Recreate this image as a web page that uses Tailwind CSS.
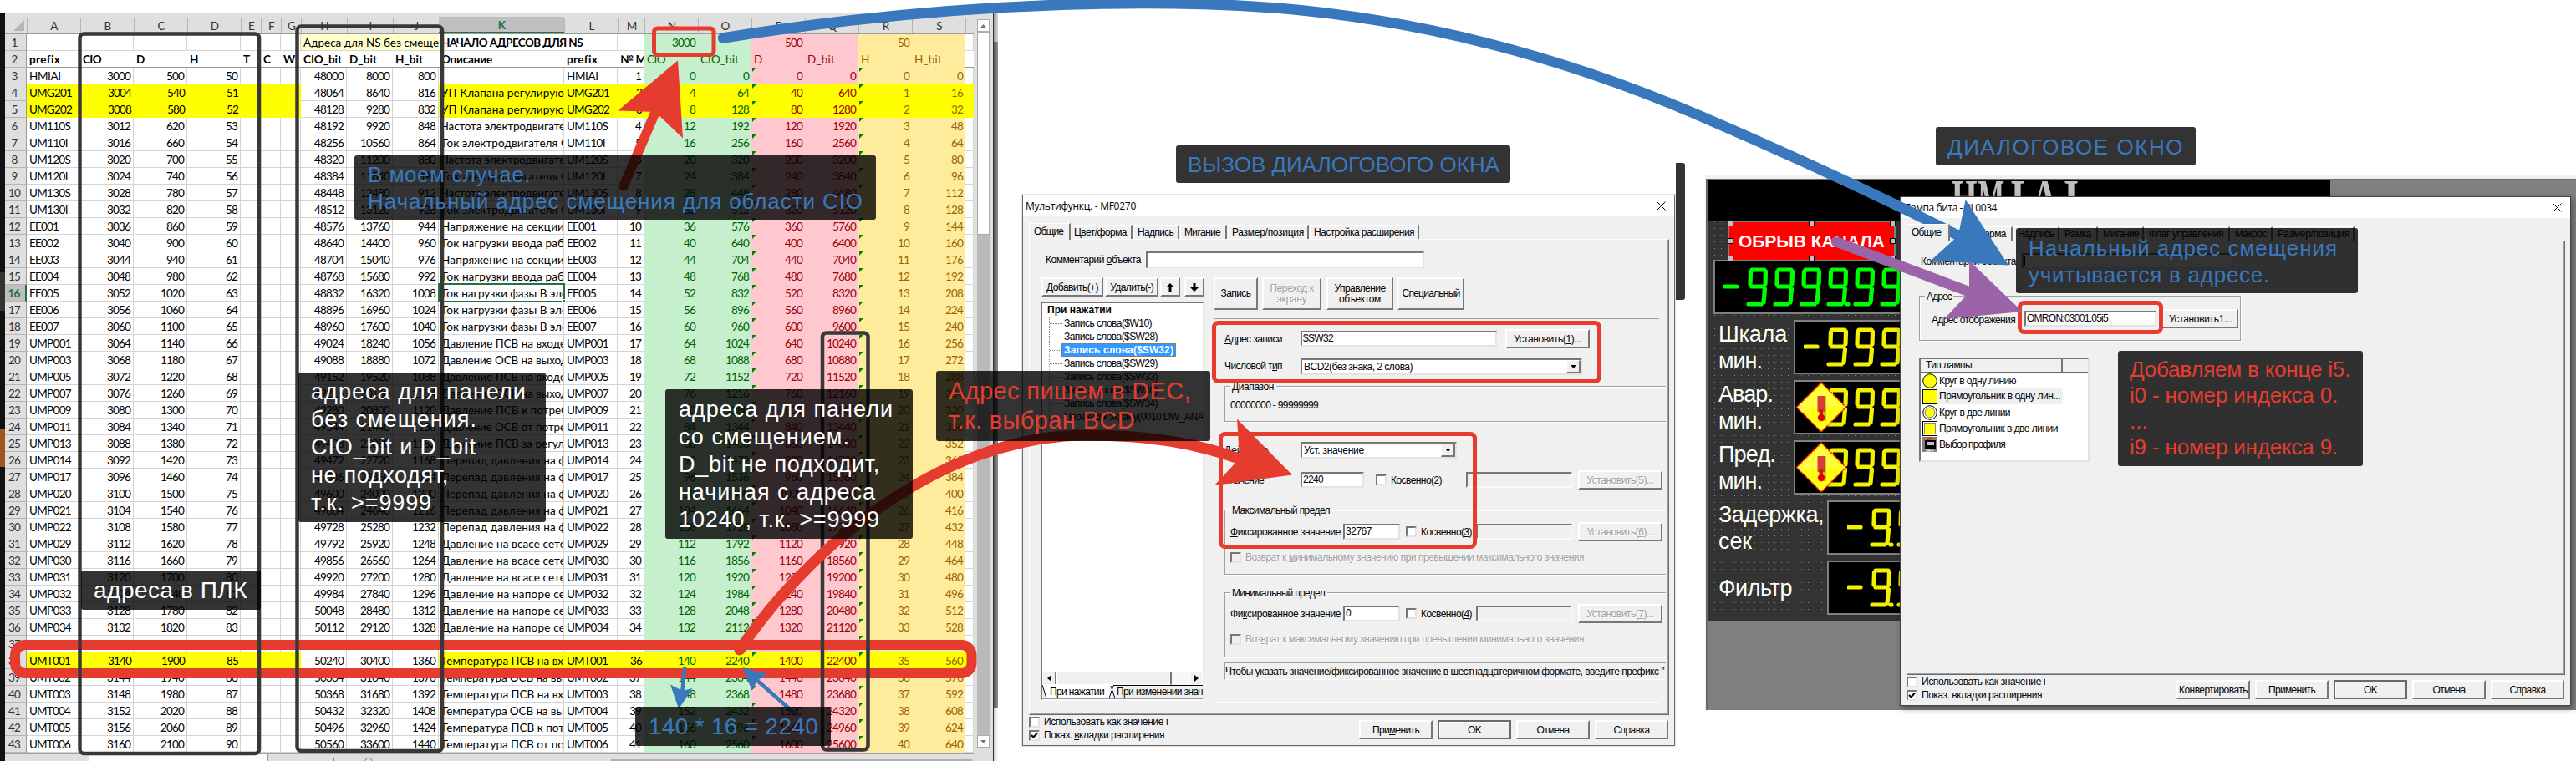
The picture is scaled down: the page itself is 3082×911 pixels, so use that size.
<!DOCTYPE html>
<html lang="ru">
<head>
<meta charset="utf-8">
<title>Адреса NS</title>
<script src="https://cdn.jsdelivr.net/npm/@tailwindcss/browser@4"></script>
</head>
<body class="bg-white">
<main class="relative w-[3082px] h-[911px] overflow-hidden bg-white whitespace-nowrap font-['Liberation_Sans',sans-serif] text-[12px] leading-[16px] text-black">

<!-- Spreadsheet window -->
<section class="absolute left-0 top-[15px] w-[1194px] h-[896px] flex overflow-hidden">
  <div class="w-[6px] flex flex-col bg-[#111111]">
    <div class="mt-[311px] h-[46px] bg-[#333333]"></div>
    <div class="mt-[141px] h-[46px] bg-[#a0561f]"></div>
  </div>
  <div class="w-[1182px] bg-[#dfdfdf] flex flex-col">
    <div class="flex h-[888px]">
      <div id="sheet" class="w-[1159px] h-[888px] overflow-hidden bg-white border-b border-[#a0a0a0] font-[Lato,'Open_Sans',sans-serif] text-[13.5px] leading-[20px] tracking-[-0.85px]"></div>
      <div class="ml-[4px] mt-[8px] w-[15px] h-[872px] flex flex-col bg-[#bababa]">
        <div class="h-[15px] bg-white border border-[#ababab] flex items-center justify-center"><svg width="7" height="4"><path d="M0 4L3.5 0L7 4z" fill="#777"/></svg></div>
        <div class="h-[243px] bg-white border border-[#ababab]"></div>
        <div class="mt-auto h-[15px] bg-white border border-[#ababab] flex items-center justify-center"><svg width="7" height="4"><path d="M0 0L3.5 4L7 0z" fill="#777"/></svg></div>
      </div>
    </div>
    <div class="flex h-[8px]">
      <div class="w-[101px]"></div>
      <div class="w-[214px] bg-white border-r border-[#999999]"></div>
      <div class="ml-[78px] mt-[4px] w-px h-[4px] bg-[#888888]"></div>
      <div class="ml-[36px] mt-[4px] w-[10px] h-[10px] rounded-full border border-[#777777]"></div>
      <div class="ml-[285px] mt-[6px] w-[432px] h-[2px] bg-[#b0b0b0]"></div>
    </div>
  </div>
  <div class="w-[6px] flex flex-col border-l border-[#333333]">
    <div class="h-[35px] bg-linear-to-r from-[#999999] to-[#d5d5d5]"></div>
    <div class="h-[797px] bg-linear-to-r from-[#555555] to-[#8f8f8f]"></div>
    <div class="h-[64px] bg-linear-to-r from-[#cccccc] to-white"></div>
  </div>
</section>

<!-- Function dialog -->
<section class="absolute left-[1223px] top-[233px] w-[781px] h-[660px] bg-[#f0f0f0] border border-[#6b6b6b] shadow-[0_0_0_1px_#e2e2e2] flex flex-col">
  <div class="h-[25px] bg-white flex items-center pl-[3px] pr-[10px] font-['Open_Sans',sans-serif] text-[12px]">
    <span data-w="132">Мультифункц. - MF0270</span>
    <svg class="ml-auto" width="11" height="11"><path d="M.5 .5L10.5 10.5M10.5 .5L.5 10.5" stroke="#000" fill="none"/></svg>
  </div>
  <div class="mt-[8px] ml-[7px] h-[19px] flex items-end">
    <div class="w-[50px] h-[20px] -mb-px z-10 bg-[#f0f0f0] border-t border-l border-white border-r-2 border-r-[#777777] pl-[5px] pt-[1px]"><span data-w="35">Общие</span></div>
    <div class="w-[74px] h-[17px] border-t border-t-white border-r-2 border-r-[#777777] pl-[4px]"><span data-w="63">Цвет/форма</span></div>
    <div class="ml-px w-[55px] h-[17px] border-t border-l border-white border-r-2 border-r-[#777777] pl-[4px]"><span data-w="43">Надпись</span></div>
    <div class="ml-px w-[56px] h-[17px] border-t border-l border-white border-r-2 border-r-[#777777] pl-[4px]"><span data-w="43">Мигание</span></div>
    <div class="ml-px w-[97px] h-[17px] border-t border-l border-white border-r-2 border-r-[#777777] pl-[4px]"><span data-w="86">Размер/позиция</span></div>
    <div class="ml-px w-[131px] h-[17px] border-t border-l border-white border-r-2 border-r-[#777777] pl-[4px]"><span data-w="120">Настройка расширения</span></div>
  </div>
  <div class="ml-[7px] w-[766px] h-[570px] border border-t-white border-l-white border-r-[#696969] border-b-[#696969] shadow-[inset_-1px_-1px_0_#a0a0a0] flex flex-col">
    <div class="mt-[14px] h-[20px] pl-[19px] flex items-center">
      <span class="w-[120px]"><span data-w="114">Комментарий <u>о</u>бъекта</span></span>
      <div class="w-[333px] h-[20px] bg-white border border-t-2 border-t-[#777777] border-l-2 border-l-[#777777] border-[#e3e3e3]"></div>
    </div>
    <div class="mt-[11px] flex">
      <div class="ml-[13px] w-[196px] flex flex-col">
        <div class="flex h-[23px] pl-px">
          <div class="w-[75px] flex items-center justify-center border-2 border-t-white border-l-white border-r-[#777777] border-b-[#777777]"><span data-w="62">Добавить(<u>+</u>)</span></div>
          <div class="ml-[2px] w-[65px] flex items-center justify-center border-2 border-t-white border-l-white border-r-[#777777] border-b-[#777777]"><span data-w="52">Удалить(<u>-</u>)</span></div>
          <div class="ml-[2px] w-[24px] flex items-center justify-center border-2 border-t-white border-l-white border-r-[#777777] border-b-[#777777]"><svg width="10" height="10"><path d="M5 0L10 5H6.5V10H3.5V5H0z"/></svg></div>
          <div class="ml-[5px] w-[24px] shrink-0 flex items-center justify-center border-2 border-t-white border-l-white border-r-[#777777] border-b-[#777777]"><svg width="10" height="10"><path d="M5 10L10 5H6.5V0H3.5V5H0z"/></svg></div>
        </div>
        <div class="mt-[6px] h-[478px] bg-white border-2 border-t-[#777777] border-l-[#777777] border-r-[#e8e8e8] border-b-[#fafafa] overflow-hidden flex flex-col">
          <div class="h-[16px] pl-[6px] font-bold"><span data-w="77">При нажатии</span></div>
          <div class="ml-[8px] border-l border-dotted border-[#808080] flex flex-col">
            <div class="h-[16px] flex items-center"><i class="w-[15px] border-t border-dotted border-[#808080]"></i><span class="ml-[2px]" data-w="105">Запись слова($W10)</span></div>
            <div class="h-[16px] flex items-center"><i class="w-[15px] border-t border-dotted border-[#808080]"></i><span class="ml-[2px]" data-w="112">Запись слова($SW28)</span></div>
            <div class="h-[16px] flex items-center"><i class="w-[14px] border-t border-dotted border-[#808080]"></i><div class="w-[137px] h-[16px] leading-[14px] bg-[#3399ff] border border-dotted border-[#cc6600] text-white font-bold pl-[2px]"><span data-w="131">Запись слова($SW32)</span></div></div>
            <div class="h-[16px] flex items-center"><i class="w-[15px] border-t border-dotted border-[#808080]"></i><span class="ml-[2px]" data-w="112">Запись слова($SW29)</span></div>
            <div class="h-[16px] flex items-center"><i class="w-[15px] border-t border-dotted border-[#808080]"></i><span class="ml-[2px]" data-w="112">Запись слова($SW33)</span></div>
            <div class="h-[16px] flex items-center"><i class="w-[15px] border-t border-dotted border-[#808080]"></i><span class="ml-[2px]" data-w="112">Запись слова($SW30)</span></div>
            <div class="h-[16px] flex items-center"><i class="w-[15px] border-t border-dotted border-[#808080]"></i><span class="ml-[2px]" data-w="112">Запись слова($SW34)</span></div>
            <div class="h-[16px] flex items-center"><i class="w-[15px] shrink-0 border-t border-dotted border-[#808080]"></i><span class="ml-[2px]" data-w="167">Переход к экрану(0010:DW_ANA</span></div>
          </div>
          <div class="mt-auto h-[16px] flex bg-[#f7f7f7]">
            <div class="w-[17px] bg-[#f0f0f0] border border-white border-r-2 border-r-[#777777] flex items-center justify-center"><svg width="5" height="8"><path d="M5 0V8L0 4z"/></svg></div>
            <div class="w-[138px] bg-[#f0f0f0] border border-white border-r-2 border-r-[#777777]"></div>
            <div class="ml-auto w-[16px] bg-[#f0f0f0] border border-white flex items-center justify-center"><svg width="5" height="8"><path d="M0 0V8L5 4z"/></svg></div>
          </div>
          <div class="h-[17px] flex bg-[#f0f0f0] border-b border-[#999999]">
            <svg class="shrink-0" width="6" height="16"><path d="M0 0H6V16H5z" fill="#fff"/><path d="M0 0L5 16" stroke="#000"/></svg>
            <div class="w-[75px] bg-white pl-[3px]"><span data-w="65">При нажатии</span></div>
            <svg class="shrink-0" width="8" height="16"><path d="M0 0H6L3 16H0z" fill="#fff"/><path d="M0 16L5 1M2 1L7 16M5 .5H8" stroke="#000" fill="none"/></svg>
            <div class="flex-1 border-t border-black pl-px leading-[15px]"><span data-w="103">При изменении знач</span></div>
          </div>
        </div>
      </div>
      <div class="ml-[11px] w-[541px] flex flex-col">
        <div class="flex h-[39px] leading-[13px] text-center">
          <div class="w-[53px] flex items-center justify-center border-2 border-t-white border-l-white border-r-[#777777] border-b-[#777777]"><span data-w="36">Запись</span></div>
          <div class="ml-[5px] w-[71px] flex flex-col items-center justify-center border-2 border-t-white border-l-white border-r-[#777777] border-b-[#777777] text-[#a0a0a0] text-shadow-[1px_1px_0_#fff]"><span data-w="52">Переход к</span><span data-w="36">экрану</span></div>
          <div class="ml-[6px] w-[80px] flex flex-col items-center justify-center border-2 border-t-white border-l-white border-r-[#777777] border-b-[#777777]"><span data-w="61">Управление</span><span data-w="50">объектом</span></div>
          <div class="ml-[5px] w-[80px] flex items-center justify-center border-2 border-t-white border-l-white border-r-[#777777] border-b-[#777777]"><span data-w="69">Специальный</span></div>
        </div>
        <div class="mt-[10px] h-px w-[533px] bg-[#a0a0a0]"></div>
        <div class="h-[458px] border-l border-[#a0a0a0] flex flex-col pl-[12px]">
          <div class="mt-[12px] h-[23px] flex items-center">
            <span class="w-[91px]"><span data-w="69"><u>А</u>дрес записи</span></span>
            <div class="w-[235px] h-[19px] leading-[15px] bg-white border-2 border-t-[#777777] border-l-[#777777] border-[#e3e3e3] pl-px"><span data-w="36">$SW32</span></div>
            <div class="ml-[10px] w-[101px] h-[23px] flex items-center justify-center border-2 border-t-white border-l-white border-r-[#777777] border-b-[#777777]"><span data-w="81">Установить(<u>1</u>)...</span></div>
          </div>
          <div class="mt-[12px] h-[20px] flex items-center">
            <span class="w-[91px] -mt-[3px]"><span data-w="69">Числовой т<u>и</u>п</span></span>
            <div class="w-[337px] h-[20px] bg-white border-2 border-t-[#777777] border-l-[#777777] border-[#e3e3e3] pl-[2px] flex"><span data-w="130">BCD2(без знака, 2 слова)</span><div class="ml-auto w-[17px] h-[16px] bg-[#f0f0f0] border border-t-white border-l-white border-r-2 border-b-2 border-[#777777] flex items-center justify-center"><svg width="7" height="4"><path d="M0 0H7L3.5 4z"/></svg></div></div>
          </div>
          <div class="mt-[13px] h-[43px] w-[528px] border border-r-0 border-[#a0a0a0] shadow-[0_1px_0_#fff,inset_0_1px_0_#fff] pl-[6px] flex flex-col">
            <div class="-mt-[8px] h-[16px]"><span class="bg-[#f0f0f0] pl-[2px] pr-[3px]"><span data-w="50">Диапазон</span></span></div>
            <span class="mt-[6px]" data-w="105">00000000 - 99999999</span>
          </div>
          <div class="mt-[24px] h-[20px] flex items-center">
            <span class="w-[91px]"><u>Д</u>ействие</span>
            <div class="w-[187px] h-[20px] bg-white border-2 border-t-[#777777] border-l-[#777777] border-[#e3e3e3] pl-[2px] flex"><span data-w="72">Уст. значение</span><div class="ml-auto w-[17px] h-[16px] bg-[#f0f0f0] border border-t-white border-l-white border-r-2 border-b-2 border-[#777777] flex items-center justify-center"><svg width="7" height="4"><path d="M0 0H7L3.5 4z"/></svg></div></div>
          </div>
          <div class="mt-[14px] h-[23px] flex items-center">
            <span class="w-[91px]"><span data-w="47"><u>З</u>начение</span></span>
            <div class="w-[76px] h-[19px] leading-[15px] bg-white border-2 border-t-[#777777] border-l-[#777777] border-[#e3e3e3] pl-px"><span data-w="24">2240</span></div>
            <div class="ml-[14px] w-[13px] h-[13px] bg-white border-2 border-t-[#777777] border-l-[#777777] border-[#e3e3e3]"></div>
            <span class="ml-[5px] w-[90px]"><span data-w="61">Косвенно(<u>2</u>)</span></span>
            <div class="w-[127px] h-[19px] border-2 border-t-[#777777] border-l-[#777777] border-[#fafafa]"></div>
            <div class="ml-[7px] w-[101px] h-[23px] flex items-center justify-center border-2 border-t-white border-l-white border-r-[#777777] border-b-[#777777] text-[#a0a0a0] text-shadow-[1px_1px_0_#fff]"><span data-w="80">Установить(<u>5</u>)...</span></div>
          </div>
          <div class="mt-[24px] h-[78px] w-[528px] border border-r-0 border-[#a0a0a0] shadow-[0_1px_0_#fff,inset_0_1px_0_#fff] pl-[6px] flex flex-col">
            <div class="-mt-[8px] h-[16px]"><span class="bg-[#f0f0f0] pl-[2px] pr-[3px]"><span data-w="117">Максимальный предел</span></span></div>
            <div class="mt-[6px] h-[23px] flex items-center">
              <span class="w-[135px]"><span data-w="132"><u>Ф</u>иксированное значение</span></span>
              <div class="w-[68px] h-[19px] leading-[15px] bg-white border-2 border-t-[#777777] border-l-[#777777] border-[#e3e3e3] pl-px"><span data-w="31">32767</span></div>
              <div class="ml-[7px] w-[13px] h-[13px] bg-white border-2 border-t-[#777777] border-l-[#777777] border-[#e3e3e3]"></div>
              <span class="ml-[5px] w-[66px]"><span data-w="61">Косвенно(<u>3</u>)</span></span>
              <div class="w-[115px] h-[19px] border-2 border-t-[#777777] border-l-[#777777] border-[#fafafa]"></div>
              <div class="ml-[7px] w-[101px] h-[23px] flex items-center justify-center border-2 border-t-white border-l-white border-r-[#777777] border-b-[#777777] text-[#a0a0a0] text-shadow-[1px_1px_0_#fff]"><span data-w="80">Установить(<u>6</u>)...</span></div>
            </div>
            <div class="mt-[11px] h-[16px] flex items-center text-[#a0a0a0] text-shadow-[1px_1px_0_#fff]">
              <div class="w-[13px] h-[13px] border-2 border-t-[#777777] border-l-[#777777] border-[#e3e3e3]"></div>
              <span class="ml-[5px]" data-w="405">Возврат к <u>м</u>инимальному значению при превышении максимального значения</span>
            </div>
          </div>
          <div class="mt-[21px] h-[78px] w-[528px] border border-r-0 border-[#a0a0a0] shadow-[0_1px_0_#fff,inset_0_1px_0_#fff] pl-[6px] flex flex-col">
            <div class="-mt-[8px] h-[16px]"><span class="bg-[#f0f0f0] pl-[2px] pr-[3px]"><span data-w="111">Минимальный предел</span></span></div>
            <div class="mt-[5px] h-[23px] flex items-center">
              <span class="w-[135px]"><span data-w="132">Фи<u>к</u>сированное значение</span></span>
              <div class="w-[68px] h-[19px] leading-[15px] bg-white border-2 border-t-[#777777] border-l-[#777777] border-[#e3e3e3] pl-px">0</div>
              <div class="ml-[7px] w-[13px] h-[13px] bg-white border-2 border-t-[#777777] border-l-[#777777] border-[#e3e3e3]"></div>
              <span class="ml-[5px] w-[66px]"><span data-w="61">Косвенно(<u>4</u>)</span></span>
              <div class="w-[115px] h-[19px] border-2 border-t-[#777777] border-l-[#777777] border-[#fafafa]"></div>
              <div class="ml-[7px] w-[101px] h-[23px] flex items-center justify-center border-2 border-t-white border-l-white border-r-[#777777] border-b-[#777777] text-[#a0a0a0] text-shadow-[1px_1px_0_#fff]"><span data-w="80">Установить(<u>7</u>)...</span></div>
            </div>
            <div class="mt-[11px] h-[16px] flex items-center text-[#a0a0a0] text-shadow-[1px_1px_0_#fff]">
              <div class="w-[13px] h-[13px] border-2 border-t-[#777777] border-l-[#777777] border-[#e3e3e3]"></div>
              <span class="ml-[5px]" data-w="405">Воз<u>в</u>рат к максимальному значению при превышении минимального значения</span>
            </div>
          </div>
          <div class="mt-[6px] h-[21px] w-[528px] leading-[20px] border-t border-l border-[#a0a0a0] border-b border-b-white overflow-hidden"><span data-w="525">Чтобы указать значение/фиксированное значение в шестнадцатеричном формате, введите префикс "</span></div>
        </div>
        <div class="h-px w-[533px] bg-white"></div>
      </div>
    </div>
  </div>
  <div class="flex pl-[7px] pt-[1px]">
    <div class="w-[170px] flex flex-col">
      <div class="h-[16px] flex items-center -mt-px"><div class="w-[13px] h-[13px] shrink-0 bg-white border-2 border-t-[#777777] border-l-[#777777] border-[#e3e3e3]"></div><span class="ml-[5px] w-[148px] overflow-hidden"><span data-w="152">Использовать как значение п</span></span></div>
      <div class="h-[16px] flex items-center"><div class="w-[13px] h-[13px] bg-white border-2 border-t-[#777777] border-l-[#777777] border-[#e3e3e3]"><svg width="9" height="9"><path d="M1 4L3.5 6.5L8 1.5" stroke="#000" stroke-width="2" fill="none"/></svg></div><span class="ml-[5px]" data-w="144">Показ. <u>в</u>кладки расширения</span></div>
    </div>
    <div class="ml-[225px] mt-[5px] h-[23px] flex gap-[6px]">
      <div class="w-[88px] flex items-center justify-center border-2 border-t-white border-l-white border-r-[#777777] border-b-[#777777]"><span data-w="56">При<u>м</u>енить</span></div>
      <div class="w-[88px] flex items-center justify-center border-2 border-[#696969] shadow-[inset_1px_1px_0_#fff]"><span data-w="16">OK</span></div>
      <div class="w-[88px] flex items-center justify-center border-2 border-t-white border-l-white border-r-[#777777] border-b-[#777777]"><span data-w="39">Отмена</span></div>
      <div class="w-[88px] flex items-center justify-center border-2 border-t-white border-l-white border-r-[#777777] border-b-[#777777]"><span data-w="43">Справка</span></div>
    </div>
  </div>
</section>

<!-- Panel editor -->
<section class="absolute left-[2040px] top-[210px] w-[1042px] h-[640px] bg-[#808080] border-t-[4px] border-t-[#f0f0f0] border-l border-l-[#f0f0f0] overflow-hidden">
  <div class="w-full h-[636px] border-t-2 border-l-2 border-[#696969] flex flex-col">
    <div class="w-[745px] h-[48px] bg-black overflow-hidden pl-[291px]">
      <div class="flex font-['Liberation_Serif',serif] font-bold text-[62px] leading-[62px] text-[#c0c0c0] -mt-[11px]">
        <span class="w-[32px] flex justify-center"><span class="shrink-0 scale-x-[.64]">H</span></span><span class="w-[32px] flex justify-center"><span class="shrink-0 scale-x-[.54]">M</span></span><span class="w-[32px] flex justify-center"><span class="shrink-0 scale-x-[.75]">I</span></span><span class="w-[32px] flex justify-center"><span class="shrink-0 scale-x-[.7]">A</span></span><span class="w-[32px] flex justify-center"><span class="shrink-0 scale-x-[.75]">I</span></span>
      </div>
    </div>
    <div class="w-[745px] h-[480px] bg-[#333333] bg-[radial-gradient(circle_at_0.5px_0.5px,#8a8a8a_0.6px,transparent_1px)] bg-size-[8px_8px] border-t border-[#808080] flex flex-col text-[27px] leading-[32px] text-[#fffff4]">
      <div class="-mt-px ml-[24px] w-[201px] h-[49px] bg-[#ff0000] border-2 border-[#808080] flex items-center justify-center font-bold text-[21px] text-white pt-px"><span data-w="175">ОБРЫВ КАНАЛА</span></div>
      <div class="-mt-[2px] ml-[7px] w-[330px] h-[65px] bg-black border-2 border-[#808080] flex items-center pl-[10px]" data-led="#00ff00" data-n="-9999.99"></div>
      <div class="mt-[7px] h-[65px] flex"><div class="w-[103px] pl-[13px] flex flex-col justify-center"><span data-w="82">Шкала</span><span data-w="52">мин.</span></div><div class="w-[300px] bg-black border-2 border-[#808080] flex items-center pl-[10px]" data-led="#f2f200" data-n="-999"></div></div>
      <div class="mt-[7px] h-[65px] flex"><div class="w-[103px] pl-[13px] flex flex-col justify-center"><span data-w="65">Авар.</span><span data-w="52">мин.</span></div><div class="w-[300px] bg-black border-2 border-[#808080] flex items-center pl-[10px]" data-led="#f2f200" data-n="-999"></div></div>
      <div class="mt-[7px] h-[65px] flex"><div class="w-[103px] pl-[13px] flex flex-col justify-center"><span data-w="68">Пред.</span><span data-w="52">мин.</span></div><div class="w-[300px] bg-black border-2 border-[#808080] flex items-center pl-[10px]" data-led="#f2f200" data-n="-999"></div></div>
      <div class="mt-[7px] h-[65px] flex"><div class="w-[143px] pl-[13px] flex flex-col justify-center"><span data-w="126">Задержка,</span><span data-w="40">сек</span></div><div class="w-[260px] bg-black border-2 border-[#808080] flex items-center pl-[22px]" data-led="#f2f200" data-n="-9.9"></div></div>
      <div class="mt-[7px] h-[65px] flex"><div class="w-[143px] pl-[13px] flex flex-col justify-center"><span data-w="88">Фильтр</span></div><div class="w-[260px] bg-black border-2 border-[#808080] flex items-center pl-[22px]" data-led="#f2f200" data-n="-9.9"></div></div>
    </div>
  </div>
</section>

<!-- Selection handles and alarm diamonds -->
<svg class="absolute left-[2043px] top-[214px]" width="260" height="420">
  <g fill="#c0c0c0" stroke="#000">
    <rect x="24.500" y="50.500" width="6" height="6"/><rect x="121.500" y="50.500" width="6" height="6"/><rect x="218.500" y="50.500" width="6" height="6"/>
    <rect x="24.500" y="71.500" width="6" height="6"/><rect x="218.500" y="71.500" width="6" height="6"/>
    <rect x="24.500" y="92.500" width="6" height="6"/><rect x="121.500" y="92.500" width="6" height="6"/><rect x="218.500" y="92.500" width="6" height="6"/>
  </g>
  <g id="warn">
    <path d="M136 244L165.500 273.500L136 303L106.500 273.500z" fill="#ffff18" stroke="#ff1e00" stroke-width="1.500" stroke-dasharray="3 1"/>
    <path d="M136 249L160 273Q136 270 112 279L107.500 273.500z" fill="#ffff60" opacity=".6"/>
    <rect x="135" y="260" width="7" height="30" fill="#a09000" opacity=".5"/>
    <rect x="131.500" y="260" width="8.500" height="19" fill="#dc3c3c"/><rect x="133.500" y="276" width="4.500" height="6" fill="#cc1414"/>
    <circle cx="136" cy="286" r="4.200" fill="#e00000"/>
  </g>
  <use href="#warn" y="72"/>
</svg>

<!-- Lamp dialog -->
<section class="absolute left-[2273px] top-[235px] w-[803px] h-[610px] bg-[#f0f0f0] border border-[#444444] shadow-[2px_3px_8px_rgba(0,0,0,.4)] flex flex-col">
  <div class="h-[25px] bg-white flex items-center pl-[4px] pr-[10px] font-['Open_Sans',sans-serif] text-[12px]">
    <span data-w="111">Лампа бита - PL0034</span>
    <svg class="ml-auto" width="11" height="11"><path d="M.5 .5L10.5 10.5M10.5 .5L.5 10.5" stroke="#000" fill="none"/></svg>
  </div>
  <div class="mt-[7px] ml-[7px] h-[20px] flex items-end">
    <div class="w-[52px] h-[21px] -mb-px z-10 bg-[#f0f0f0] border-t border-l border-white border-r-2 border-r-[#777777] pl-[5px] pt-px"><span data-w="35">Общие</span></div>
    <div class="w-[75px] h-[17px] border-t border-t-white border-r-2 border-r-[#777777] pl-[4px]"><span data-w="63">Цвет/форма</span></div>
    <div class="ml-px w-[55px] h-[17px] border-t border-l border-white border-r-2 border-r-[#777777] pl-[4px]"><span data-w="43">Надпись</span></div>
    <div class="ml-px w-[45px] h-[17px] border-t border-l border-white border-r-2 border-r-[#777777] pl-[4px]"><span data-w="32">Рамка</span></div>
    <div class="ml-px w-[54px] h-[17px] border-t border-l border-white border-r-2 border-r-[#777777] pl-[4px]"><span data-w="43">Мигание</span></div>
    <div class="ml-px w-[102px] h-[17px] border-t border-l border-white border-r-2 border-r-[#777777] pl-[4px]"><span data-w="89">Флаг управления</span></div>
    <div class="ml-px w-[50px] h-[17px] border-t border-l border-white border-r-2 border-r-[#777777] pl-[4px]"><span data-w="38">Макрос</span></div>
    <div class="ml-px w-[97px] h-[17px] border-t border-l border-white border-r-2 border-r-[#777777] pl-[4px]"><span data-w="86">Размер/позиция</span></div>
  </div>
  <div class="ml-[7px] w-[788px] h-[520px] border border-t-white border-l-white border-r-[#696969] border-b-[#696969] shadow-[inset_-1px_-1px_0_#a0a0a0] flex flex-col">
    <div class="mt-[14px] h-[19px] pl-[16px] flex items-center">
      <span class="w-[121px]"><span data-w="114">Комментарий объекта</span></span>
      <div class="w-[254px] h-[19px] bg-white border-2 border-t-[#777777] border-l-[#777777] border-[#e3e3e3] py-px pl-px"><div class="w-px h-full bg-black"></div></div>
    </div>
    <div class="mt-[32px] ml-[14px] w-[385px] h-[54px] border border-[#a0a0a0] shadow-[1px_1px_0_#fff,inset_1px_1px_0_#fff] pl-[6px] flex flex-col">
      <div class="-mt-[8px] h-[16px]"><span class="bg-[#f0f0f0] px-[2px]"><span data-w="30">Адрес</span></span></div>
      <div class="mt-[7px] h-[23px] flex items-center">
        <span class="ml-[8px] w-[111px] pt-[2px]"><span data-w="100">Адрес отображения</span></span>
        <div class="w-[158px] h-[19px] leading-[15px] bg-white border-2 border-t-[#777777] border-l-[#777777] border-[#e3e3e3] pl-px"><span data-w="97">OMRON:03001.05i5</span></div>
        <div class="ml-[7px] w-[91px] h-[23px] flex items-center justify-center border-2 border-t-white border-l-white border-r-[#777777] border-b-[#777777]"><span data-w="75">Установить1...</span></div>
      </div>
    </div>
    <div class="mt-[20px] ml-[14px] w-[204px] h-[125px] bg-white border-2 border-t-[#777777] border-l-[#777777] border-[#e3e3e3] flex flex-col">
      <div class="flex h-[16px] bg-[#f0f0f0] border-b border-[#696969] leading-[15px]"><div class="w-[170px] pl-[6px] border-r-2 border-[#777777]"><span data-w="55">Тип лампы</span></div></div>
      <div class="h-[19px] flex items-center pl-[2px]"><svg width="18" height="18"><circle cx="9" cy="9" r="8.300" fill="#ff0" stroke="#000"/></svg><span class="ml-[2px]" data-w="92">Круг в одну линию</span></div>
      <div class="h-[19px] flex items-center pl-[2px]"><svg width="18" height="18"><rect x=".5" y=".5" width="17" height="17" fill="#ff0" stroke="#000"/></svg><span class="ml-px pl-px w-[149px] h-[19px] leading-[19px] bg-[#f0f0f0]"><span data-w="145">Прямоугольник в одну лин...</span></span></div>
      <div class="h-[19px] flex items-center pl-[2px]"><svg width="18" height="18"><circle cx="9" cy="9" r="8.300" fill="#fff" stroke="#000"/><circle cx="9" cy="9" r="6" fill="#ff0" stroke="#777"/></svg><span class="ml-[2px]" data-w="85">Круг в две линии</span></div>
      <div class="h-[19px] flex items-center pl-[2px]"><svg width="18" height="18"><rect x=".5" y=".5" width="17" height="17" fill="#fff" stroke="#000"/><rect x="2.500" y="2.500" width="13" height="13" fill="#ff0" stroke="#888"/></svg><span class="ml-[2px]" data-w="142">Прямоугольник в две линии</span></div>
      <div class="h-[19px] flex items-center pl-[2px]"><div class="w-[18px] h-[18px] bg-[#808080] flex flex-col items-center text-[5px] leading-[4px] font-bold"><span class="text-[#ff0000]">ON</span><div class="w-[13px] h-[10px] bg-[#c0c0c0] border-2 border-black border-b-[4px]"></div><span class="text-white">OFF</span></div><span class="ml-[2px]" data-w="79">Выбор профиля</span></div>
    </div>
  </div>
  <div class="flex pl-[7px] pr-[7px]">
    <div class="w-[170px] flex flex-col">
      <div class="h-[16px] flex items-center"><div class="w-[13px] h-[13px] shrink-0 bg-white border-2 border-t-[#777777] border-l-[#777777] border-[#e3e3e3]"></div><span class="ml-[5px] w-[148px] overflow-hidden"><span data-w="152">Использовать как значение п</span></span></div>
      <div class="h-[16px] flex items-center"><div class="w-[13px] h-[13px] bg-white border-2 border-t-[#777777] border-l-[#777777] border-[#e3e3e3]"><svg width="9" height="9"><path d="M1 4L3.5 6.5L8 1.5" stroke="#000" stroke-width="2" fill="none"/></svg></div><span class="ml-[5px]" data-w="144">Показ. вкладки расширения</span></div>
    </div>
    <div class="ml-auto mt-[6px] h-[23px] flex gap-[6px]">
      <div class="w-[88px] flex items-center justify-center border-2 border-t-white border-l-white border-r-[#777777] border-b-[#777777]"><span data-w="82">Конвертировать</span></div>
      <div class="w-[88px] flex items-center justify-center border-2 border-t-white border-l-white border-r-[#777777] border-b-[#777777]"><span data-w="56">Применить</span></div>
      <div class="w-[88px] flex items-center justify-center border-2 border-[#696969] shadow-[inset_1px_1px_0_#fff]"><span data-w="16">OK</span></div>
      <div class="w-[88px] flex items-center justify-center border-2 border-t-white border-l-white border-r-[#777777] border-b-[#777777]"><span data-w="39">Отмена</span></div>
      <div class="w-[88px] flex items-center justify-center border-2 border-t-white border-l-white border-r-[#777777] border-b-[#777777]"><span data-w="43">Справка</span></div>
    </div>
  </div>
</section>

<!-- Frames and arrows drawn over the windows -->
<svg class="absolute left-0 top-0" width="3082" height="911" fill="none">
  <rect x="18" y="772" width="1144.500" height="34" rx="12" stroke="#e63c30" stroke-width="12"/>
  <g stroke="#383838" stroke-width="4.500">
    <rect x="95.500" y="40.500" width="214.500" height="861.500" rx="5"/>
    <rect x="355.500" y="31.500" width="173.500" height="867.500" rx="5"/>
    <rect x="984" y="398.500" width="54.500" height="499" rx="5"/>
  </g>
  <path d="M885 778C960 665 1120 521 1300 521C1375 521 1430 530 1485 550" stroke="#e63c30" stroke-width="13" stroke-linecap="round"/>
  <path d="M1546 568.500L1480 501.500L1483 549L1453 581z" fill="#e63c30"/>
  <g stroke="#e63c30" stroke-width="5">
    <rect x="782.500" y="34" width="71.500" height="31.500" rx="4"/>
    <rect x="1452.500" y="386.500" width="461" height="70" rx="5"/>
    <rect x="1460.500" y="519.500" width="304" height="135" rx="5"/>
    <rect x="2416.500" y="362.500" width="169" height="35" rx="5"/>
  </g>
  <path d="M746 223L785 132" stroke="#e63c30" stroke-width="11.500" stroke-linecap="round"/>
  <path d="M811 72.500L739 132.500L784 134L817 165.500z" fill="#e63c30"/>
  <path d="M865 45.500Q1160 -2 1440 5C1650 10 1850 60 2030 137Q2200 210 2345 283" stroke="#3a78be" stroke-width="12.500"/>
  <circle cx="865" cy="45.500" r="6.200" fill="#3a78be"/>
  <path d="M2403 317.500L2351.500 239L2343 282L2310 312z" fill="#3a78be"/>
  <path d="M2197 289.500L2358 350" stroke="#9b63a8" stroke-width="12.500" stroke-linecap="round"/>
  <path d="M2419.500 373L2356 312L2356 350L2326 382z" fill="#9b63a8"/>
  <path d="M819.500 798L816 830M953 856L903 812" stroke="#3a78be" stroke-width="4.500"/>
  <path d="M812 848.500L802 819.500L816.500 827L828.500 824zM888.500 799L918 807L906 815L899.500 826.500z" fill="#3a78be"/>
</svg>

<!-- Captions -->
<div class="absolute left-[424px] top-[186px] w-[624px] h-[77px] rounded-[3px] bg-black/80 pl-[16px] pt-[7px] text-[26px] leading-[32px] text-[#3a78be] flex flex-col items-start"><span data-w="195">В моем случае.</span><span data-w="593">Начальный адрес смещения для области CIO</span></div>
<div class="absolute left-[357px] top-[446px] w-[296px] h-[179px] rounded-[3px] bg-black/80 pl-[15px] pt-[7px] text-[27px] leading-[33.2px] text-white flex flex-col items-start"><span data-w="258">адреса для панели</span><span data-w="199">без смещения.</span><span data-w="198">CIO_bit и D_bit</span><span data-w="165">не подходят,</span><span data-w="145">т.к. &gt;=9999</span></div>
<div class="absolute left-[97px] top-[683px] w-[215px] h-[47px] rounded-[3px] bg-black/80 pl-[15px] pt-[7px] text-[28px] leading-[33px] text-white"><span data-w="184">адреса в ПЛК</span></div>
<div class="absolute left-[796px] top-[466px] w-[296px] h-[179px] rounded-[3px] bg-black/80 pl-[16px] pt-[8px] text-[27px] leading-[33px] text-white flex flex-col items-start"><span data-w="257">адреса для панели</span><span data-w="205">со смещением.</span><span data-w="241">D_bit не подходит,</span><span data-w="236">начиная с адреса</span><span data-w="241">10240, т.к. &gt;=9999</span></div>
<div class="absolute left-[1120px] top-[444px] w-[328px] h-[84px] rounded-[3px] bg-black/80 pl-[15px] pt-[7px] text-[29px] leading-[35px] text-[#e63c30] flex flex-col items-start"><span data-w="290">Адрес пишем в DEC,</span><span data-w="223">т.к. выбран BCD</span></div>
<div class="absolute left-[760px] top-[846px] w-[234px] h-[47px] rounded-[3px] bg-black/80 pl-[16px] pt-[7px] text-[28px] leading-[33px] text-[#3a78be]"><span data-w="203">140 * 16 = 2240</span></div>
<div class="absolute left-[1407px] top-[174px] w-[400px] h-[45px] rounded-[3px] bg-[#333333] pl-[14px] pt-[7px] text-[26px] leading-[32px] text-[#3a78be]"><span data-w="373">ВЫЗОВ ДИАЛОГОВОГО ОКНА</span></div>
<div class="absolute left-[2005px] top-[195px] w-[11px] h-[164px] rounded-r-[3px] bg-[#333333]"></div>
<div class="absolute left-[2316px] top-[152px] w-[311px] h-[46px] rounded-[3px] bg-[#333333] pl-[14px] pt-[8px] text-[26px] leading-[32px] text-[#3a78be]"><span data-w="283">ДИАЛОГОВОЕ ОКНО</span></div>
<div class="absolute left-[2412px] top-[273px] w-[409px] h-[78px] rounded-[3px] bg-black/80 pl-[15px] pt-[8px] text-[26px] leading-[32px] text-[#3a78be] flex flex-col items-start"><span data-w="370">Начальный адрес смещения</span><span data-w="289">учитывается в адресе.</span></div>
<div class="absolute left-[2534px] top-[420px] w-[293px] h-[138px] rounded-[3px] bg-black/80 pl-[14px] pt-[7px] text-[26px] leading-[31px] text-[#e63c30] flex flex-col items-start"><span data-w="264">Добавляем в конце i5.</span><span data-w="249">i0 - номер индекса 0.</span><span>...</span><span data-w="249">i9 - номер индекса 9.</span></div>
</main>

<script>
const ROW = "grid grid-cols-[26px_64px_64px_64px_64px_24px_24px_24px_55px_55px_55px_150px_64px_32px_64px_64px_64px_64px_64px_64px_10px]";
const prefixes = "HMIAI UMG201 UMG202 UM110S UM110I UM120S UM120I UM130S UM130I EE001 EE002 EE003 EE004 EE005 EE006 EE007 UMP001 UMP003 UMP005 UMP007 UMP009 UMP011 UMP013 UMP014 UMP017 UMP020 UMP021 UMP022 UMP029 UMP030 UMP031 UMP032 UMP033 UMP034 UMP035 UMT001 UMT002 UMT003 UMT004 UMT005 UMT006".split(" ");
/* description, its width in pixels, number of consecutive rows */
const descRuns = [["", 0, 1], ["УП Клапана регулирую", 147, 2], ["Частота электродвигате", 148, 1], ["Ток электродвигателя С", 152, 1], ["Частота электродвигате", 148, 1], ["Ток электродвигателя С", 152, 1], ["Частота электродвигате", 148, 1], ["Ток электродвигателя С", 152, 1],
 ["Напряжение на секции", 147, 1], ["Ток нагрузки ввода раб", 147, 1], ["Напряжение на секции", 147, 1], ["Ток нагрузки ввода раб", 147, 1], ["Ток нагрузки фазы В эле", 151, 3],
 ["Давление ПСВ на входе", 149, 1], ["Давление ОСВ на выход", 151, 1], ["Давление ПСВ на входе", 149, 1], ["Давление ОСВ на выход", 151, 1], ["Давление ПСВ к потреб", 151, 1], ["Давление ОСВ от потре", 149, 1], ["Давление ПСВ за регул", 147, 1],
 ["Перепад давления на ф", 150, 5], ["Давление на всасе сете", 149, 3], ["Давление на напоре се", 148, 4],
 ["Температура ПСВ на вх", 146, 1], ["Температура ОСВ на вы", 147, 1], ["Температура ПСВ на вх", 146, 1], ["Температура ОСВ на вы", 147, 1], ["Температура ПСВ к пот", 147, 1], ["Температура ПСВ от по", 147, 1]];
const desc = descRuns.flatMap(([t, w, n]) => Array(n).fill(t && `<span data-w="${w}">${t}</span>`));
const prefixWidth = p => p === "HMIAI" ? 37.5 : p.startsWith("EE") ? 35 : p.startsWith("UMG") ? 51 : p.startsWith("UMP") ? 50 : p.startsWith("UMT") ? 49 : p.endsWith("S") ? 49 : 46;
const headWidth = { prefix: 37, CIO_bit: 46, D_bit: 33, H_bit: 33, "Описание": 61, CIO: 22 };
const span = (t, w) => w ? `<span data-w="${w}">${t}</span>` : t;
const tone = i => i < 14 ? "" : i < 16 ? "text-[#006100]" : i < 18 ? "text-[#9c0006]" : i < 20 ? "text-[#9c6500]" : "";
const fill = i => i < 14 || i > 19 ? "border-r border-b border-[#d4d4d4]" : i < 16 ? "bg-[#c6efce]" : i < 18 ? "bg-[#ffc7ce]" : "bg-[#ffeb9c]";
const TRI = '<svg class="absolute left-px top-0" width="5" height="5"><path d="M0 0H5L0 5z" fill="#008000"/></svg>';
let html = `<div class="${ROW} h-[26px] bg-[#dfdfdf] pt-[6px] border-b border-[#9b9b9b] text-center text-[#333333]"><div class="flex justify-end items-end pr-[3px] pb-[3px]"><svg width="13" height="13"><path d="M13 0V13H0z" fill="#b5b5b5"/></svg></div>`;
[..."ABCDEFGHIJKLMNOPQRS", ""].forEach(c => html += `<div class="${c === "K" ? "-mt-px h-[20px] bg-[#bfbfbf] text-[#217346] font-bold border-b-2 border-[#217346]" : "h-[19px] border-l border-[#b5b5b5]"}">${c}</div>`);
html += "</div>";
const head = n => `<div class="${n === 16 ? "bg-[#bfbfbf] text-[#217346] font-bold border-r-2 border-b border-r-[#217346] border-b-[#b5b5b5]" : "bg-[#dfdfdf] text-[#333333] border-r border-b border-r-[#9b9b9b] border-b-[#b5b5b5]"} h-[20px] text-center pr-[3px]">${n}</div>`;
for (let r = 1; r <= 44; r++) {
  html += `<div class="${ROW} h-[20px]">` + head(r);
  const i = r - 3, cells = Array(21).fill("");
  const yellow = r === 4 || r === 5 || r === 38;
  if (r === 1) { cells[14] = 3000; cells[16] = 500; cells[18] = 50; }
  else if (r === 2) ["prefix", "CIO", "D", "H", "T", "C", "W", "CIO_bit", "D_bit", "H_bit", "Описание", "prefix", "№ М", "CIO", "CIO_bit", "D", "D_bit", "H", "H_bit"].forEach((t, k) => cells[k + 1] = span(t, headWidth[t]));
  else if (r < 44) {
    const p = span(prefixes[i], prefixWidth(prefixes[i]));
    [p, 3000 + 4 * i, 500 + 40 * i, 50 + i, "", "", "", 48000 + 64 * i, 8000 + 640 * i, 800 + 16 * i, desc[i], p, i + 1, 4 * i, 64 * i, 40 * i, 640 * i, i, 16 * i].forEach((t, k) => cells[k + 1] = t);
  }
  for (let c = 1; c <= 20; c++) {
    if (r === 1 && c === 8) { html += `<div class="col-span-3 h-[20px] bg-[#ffffcc] border-b border-[#d4d4d4] pl-[3px] overflow-hidden">${span("Адреса для NS без смеще", 162)}</div>`; c = 10; continue; }
    if (r === 1 && c === 11) { html += `<div class="col-span-2 h-[20px] border-r border-b border-[#d4d4d4] pl-[3px] font-bold">${span("НАЧАЛО АДРЕСОВ ДЛЯ NS", 169)}</div>`; c = 12; continue; }
    const y = yellow && (c < 8 || c > 10);
    const num = typeof cells[c] === "number";
    html += `<div class="relative h-[20px] overflow-hidden ${y ? "bg-[#ffff00]" : r === 2 && (c < 14 || c > 19) ? "border-b border-[#9b9b9b]" : fill(c)} ${tone(c)} ${num ? "text-right pr-[3px]" : "pl-[3px] tracking-[-0.35px]"} ${r === 2 && c < 14 ? "font-bold" : ""}">${r > 2 && (c === 16 || c === 18) ? TRI : ""}${cells[c]}</div>`;
  }
  html += "</div>";
}
const sheet = document.getElementById("sheet");
sheet.innerHTML = html;
const mark = document.createElement("div");
mark.className = "absolute left-[524px] top-[324px] w-[152px] h-[23px] border-2 border-[#217346]";
mark.innerHTML = '<div class="absolute -right-[3px] -bottom-[3px] w-[5px] h-[5px] bg-[#217346] border border-white"></div>';
sheet.parentElement.parentElement.parentElement.appendChild(mark);

/* seven-segment numerals */
const seg = { "9": "M6 3H21M4.5 5L4 20M22.5 5L22 20M6 23H20M21.500 26L20 42M2 44H17", "-": "M2 23H16" };
document.querySelectorAll("[data-led]").forEach(el => {
  let x = 0, out = "";
  for (const ch of el.dataset.n) {
    if (ch === ".") { out += `<path d="M${x - 8} 44H${x - 7}" />`; continue; }
    out += `<path transform="translate(${x} 0)" d="${seg[ch]}"/>`;
    x += ch === "-" ? 28 : 32;
  }
  el.innerHTML = `<svg class="shrink-0" width="250" height="47" fill="none" stroke="${el.dataset.led}" stroke-width="5.200" stroke-linecap="round">${out}</svg>`;
});

/* set tracking so that each caption takes its nominal width */
function fit() {
  document.querySelectorAll("[data-w]").forEach(el => {
    el.style.display = "inline-block";
    el.style.letterSpacing = "0px";
    el.style.width = "max-content";
    const n = el.textContent.length;
    el.style.letterSpacing = ((+el.dataset.w - el.getBoundingClientRect().width) / n).toFixed(3) + "px";
  });
}
fit();
window.addEventListener("load", fit);
document.fonts.ready.then(fit);
new ResizeObserver(fit).observe(document.querySelector("main"));
</script>
</body>
</html>
